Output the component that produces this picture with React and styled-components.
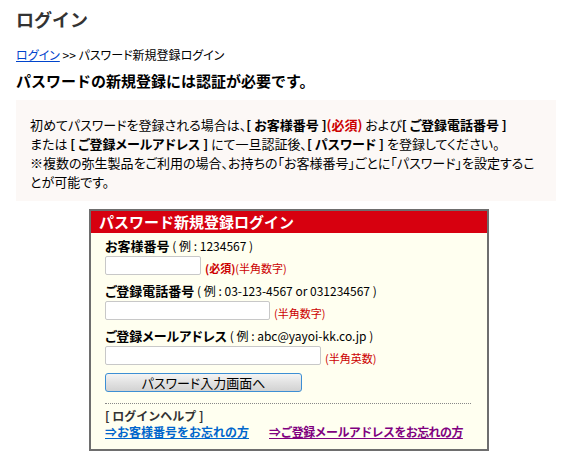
import React from 'react';
import styled, { createGlobalStyle } from 'styled-components';

const GlobalStyle = createGlobalStyle`
  body {
    margin: 0;
    background: #ffffff;
    font-family: "Noto Sans CJK JP", "Liberation Sans", sans-serif;
    color: #000;
  }
`;

const Page = styled.div`
  padding: 6px 12px 0 16px;
`;

const Heading = styled.h1`
  margin: 0;
  font-size: 18px;
  line-height: 26px;
  font-weight: 700;
  color: #333;
`;

const Breadcrumb = styled.div`
  margin-top: 15px;
  font-size: 12px;
  line-height: 16px;
  font-feature-settings: 'palt';
  a {
    color: #0044cc;
    text-decoration: underline;
  }
`;

const SubHeading = styled.h2`
  margin: 7px 0 0;
  font-size: 15px;
  line-height: 22px;
  font-weight: 700;
`;

const InfoBox = styled.div`
  margin-top: 8px;
  background: #fcf8f6;
  padding: 15px 14px 10px 14px;
  font-size: 13px;
  line-height: 19px;
  font-feature-settings: 'palt';
`;

const Strong = styled.b`
  font-weight: 700;
  white-space: pre;
`;

const Red = styled.span`
  color: #cc0000;
  font-weight: ${(p) => (p.$bold ? 700 : 400)};
`;

const FormBox = styled.div`
  width: 396px;
  margin: 8px 0 0 73px;
  border: 2px solid #6e6e6e;
  background: #fffff0;
`;

const FormTitle = styled.div`
  background: #d7000f;
  color: #fff;
  font-size: 15px;
  font-weight: 700;
  line-height: 22px;
  padding-left: 8px;
`;

const FormBody = styled.div`
  padding: 6px 13px 9px 14px;
`;

const Field = styled.div`
  & + & {
    margin-top: 9px;
  }
`;

const Label = styled.div`
  font-size: 12px;
  line-height: 14px;
  font-feature-settings: 'palt';
  white-space: pre;
  b {
    font-weight: 700;
    font-size: 13px;
  }
`;

const InputRow = styled.div`
  display: flex;
  align-items: center;
  gap: 4px;
  margin-top: 3px;
`;

const Input = styled.input`
  box-sizing: border-box;
  width: ${(p) => p.$w}px;
  height: 19px;
  border: 1px solid #c8c8c8;
  border-radius: 2px;
  background: #fff;
  padding: 0 3px;
  margin: 0;
`;

const Note = styled.span`
  font-size: 11px;
  line-height: 14px;
  margin-top: 4px;
`;

const SubmitButton = styled.button`
  display: block;
  margin-top: 8px;
  box-sizing: border-box;
  width: 197px;
  height: 19px;
  border: 1px solid #3d8fd4;
  border-radius: 3px;
  background: linear-gradient(#f4f4f4, #e2e2e2 50%, #d2d2d2);
  font-family: "Noto Sans CJK JP", sans-serif;
  font-size: 13px;
  line-height: 15px;
  padding: 0;
  color: #000;
  font-feature-settings: 'palt';
`;

const Divider = styled.hr`
  margin: 11px 0 0;
  border: 0;
  border-top: 1px dotted #888;
  width: 366px;
`;

const HelpTitle = styled.div`
  margin-top: 4px;
  font-size: 12px;
  line-height: 16px;
  font-weight: 700;
  color: #333;
  white-space: pre;
`;

const HelpLinks = styled.div`
  display: flex;
  gap: 20px;
  font-size: 12px;
  line-height: 16px;
  font-weight: 700;
  white-space: nowrap;
`;

const HelpLink = styled.a`
  color: ${(p) => (p.$visited ? '#800080' : '#0066cc')};
  text-decoration: underline;
  letter-spacing: ${(p) => (p.$visited ? '-0.6px' : '0')};
`;

export default function App() {
  return (
    <>
      <GlobalStyle />
      <Page>
        <Heading>ログイン</Heading>
        <Breadcrumb>
          <a href="#">ログイン</a> &gt;&gt; パスワード新規登録ログイン
        </Breadcrumb>
        <SubHeading>パスワードの新規登録には認証が必要です。</SubHeading>

        <InfoBox>
          初めてパスワードを登録される場合は、<Strong>{'[ お客様番号 ]'}</Strong>
          <Red $bold>(必須)</Red> および<Strong>{'[ ご登録電話番号 ]'}</Strong>
          <br />
          または <Strong>{'[ ご登録メールアドレス ]'}</Strong> にて一旦認証後、
          <Strong>{'[ パスワード ]'}</Strong> を登録してください。
          <br />
          ※複数の弥生製品をご利用の場合、お持ちの「お客様番号」ごとに「パスワード」を設定することが可能です。
        </InfoBox>

        <FormBox>
          <FormTitle>パスワード新規登録ログイン</FormTitle>
          <FormBody>
            <Field>
              <Label>
                <b>お客様番号</b>{' ( 例 : 1234567 )'}
              </Label>
              <InputRow>
                <Input $w={96} />
                <Note>
                  <Red $bold>(必須)</Red>
                  <Red>(半角数字)</Red>
                </Note>
              </InputRow>
            </Field>
            <Field>
              <Label>
                <b>ご登録電話番号</b>{' ( 例 : 03-123-4567 or 031234567 )'}
              </Label>
              <InputRow>
                <Input $w={165} />
                <Note>
                  <Red>(半角数字)</Red>
                </Note>
              </InputRow>
            </Field>
            <Field>
              <Label>
                <b>ご登録メールアドレス</b>{' ( 例 : abc@yayoi-kk.co.jp )'}
              </Label>
              <InputRow>
                <Input $w={216} />
                <Note>
                  <Red>(半角英数)</Red>
                </Note>
              </InputRow>
            </Field>
            <SubmitButton type="button">パスワード入力画面へ</SubmitButton>
            <Divider />
            <HelpTitle>{'[ ログインヘルプ ]'}</HelpTitle>
            <HelpLinks>
              <HelpLink href="#">⇒お客様番号をお忘れの方</HelpLink>
              <HelpLink href="#" $visited>
                ⇒ご登録メールアドレスをお忘れの方
              </HelpLink>
            </HelpLinks>
          </FormBody>
        </FormBox>
      </Page>
    </>
  );
}
